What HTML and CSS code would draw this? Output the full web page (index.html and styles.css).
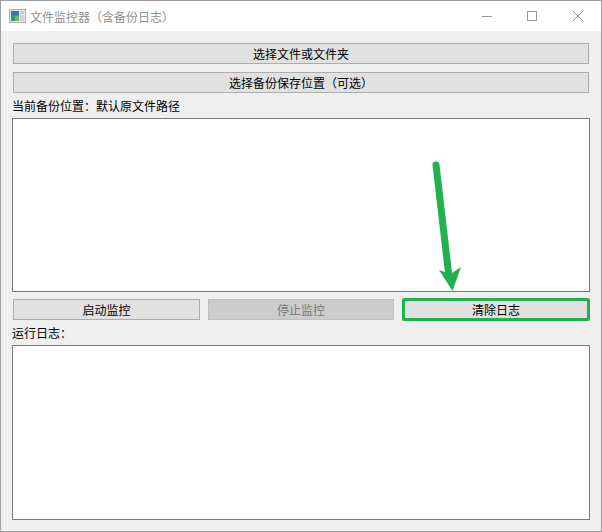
FILE: index.html
```html
<!DOCTYPE html>
<html lang="zh-CN">
<head>
    <meta charset="UTF-8">
    <title>文件监控器（含备份日志）</title>
    <link rel="stylesheet" href="styles.css">
</head>
<body>

    <div class="window">
        <!-- Title Bar -->
        <div class="titlebar">
            <svg class="app-icon" width="17" height="14" viewBox="0 0 17 14">
                <rect x="0.5" y="0.5" width="16" height="13" fill="#e8e8e8" stroke="#b0b0b0"/>
                <rect x="2" y="2" width="8" height="10" fill="#3f8f7f"/>
                <rect x="2" y="2" width="8" height="4" fill="#456f9c"/>
                <rect x="6" y="7" width="4" height="5" fill="#6fb56f"/>
                <rect x="11" y="2" width="4" height="3" fill="#b9cbd6"/>
                <rect x="11" y="6" width="4" height="6" fill="#d5d5d5"/>
            </svg>
            <span class="title-text">文件监控器（含备份日志）</span>
            <div class="controls">
                <svg width="12" height="12" viewBox="0 0 12 12"><path d="M0 6.500H10" stroke="#999" fill="none"/></svg>
                <svg width="12" height="12" viewBox="0 0 12 12"><rect x="0.5" y="1.500" width="9" height="9" stroke="#999" fill="none"/></svg>
                <svg width="12" height="12" viewBox="0 0 12 12"><path d="M1 1L11 11M11 1L1 11" stroke="#999" fill="none"/></svg>
            </div>
        </div>

        <!-- Main Content -->
        <div class="content">
            <button class="btn">选择文件或文件夹</button>
            <button class="btn second">选择备份保存位置（可选）</button>
            <div class="label backup-label">当前备份位置：默认原文件路径</div>
            <div class="textbox watch-box"></div>

            <div class="actions">
                <button class="btn">启动监控</button>
                <button class="btn disabled" disabled>停止监控</button>
                <button class="btn marked">清除日志</button>
            </div>

            <div class="label log-label">运行日志：</div>
            <div class="textbox log-box"></div>
        </div>

        <!-- Annotation Arrow -->
        <svg class="arrow" width="40" height="140" viewBox="0 0 40 140">
            <path d="M6 6L19 118" stroke="#22b14f" stroke-width="7" stroke-linecap="round" fill="none"/>
            <path d="M9 111L22.500 132L31 108L20.500 115Z" fill="#22b14f"/>
        </svg>
    </div>

</body>
</html>
```

FILE: styles.css
```css
/* Global Reset */
* {
    margin: 0;
    padding: 0;
    box-sizing: border-box;
}

body {
    font-family: "Noto Sans CJK SC", "Liberation Sans", sans-serif;
    font-size: 12px;
    color: #000;
    background-color: #efefef;
    height: 532px;
    overflow: hidden;
}

.window {
    position: relative;
    height: 532px;
    border: 1px solid #a0a0a0;
    display: flex;
    flex-direction: column;
}

/* Title Bar */
.titlebar {
    height: 30px;
    flex: none;
    background: #fff;
    display: flex;
    align-items: center;
    padding-left: 8px;
}

.app-icon {
    margin-right: 4px;
}

.title-text {
    color: #8f8f8f;
}

.controls {
    margin-left: auto;
    display: flex;
    gap: 33px;
    padding-right: 17px;
}

/* Content */
.content {
    flex: 1;
    padding: 12px 12px 0 12px;
    display: flex;
    flex-direction: column;
}

.btn {
    height: 21px;
    font-family: inherit;
    font-size: 12px;
    line-height: 17px;
    color: #000;
    background: #e1e1e1;
    border: 1px solid #adadad;
}

.second {
    margin-top: 8px;
}

.label {
    height: 16px;
    line-height: 16px;
    margin-left: -1px;
}

.backup-label {
    margin-top: 5px;
    margin-bottom: 4px;
}

.textbox {
    margin: 0 -1px;
    background: #fff;
    border: 1px solid #7a7a7a;
}

.watch-box {
    height: 174px;
}

.actions {
    display: grid;
    grid-template-columns: 187px 186px 187px;
    column-gap: 8px;
    margin-top: 7px;
}

.disabled {
    background: #cccccc;
    border-color: #bfbfbf;
    color: #787878;
}

/* Highlighted Button */
.marked {
    margin-left: 1px;
    border: 2px solid #22b14f;
    border-radius: 1px;
    box-shadow: 0 0 0 1px #22b14f;
}

.log-label {
    margin-top: 5px;
    margin-bottom: 4px;
}

.log-box {
    height: 175px;
}

.arrow {
    position: absolute;
    left: 429px;
    top: 158px;
}
```
